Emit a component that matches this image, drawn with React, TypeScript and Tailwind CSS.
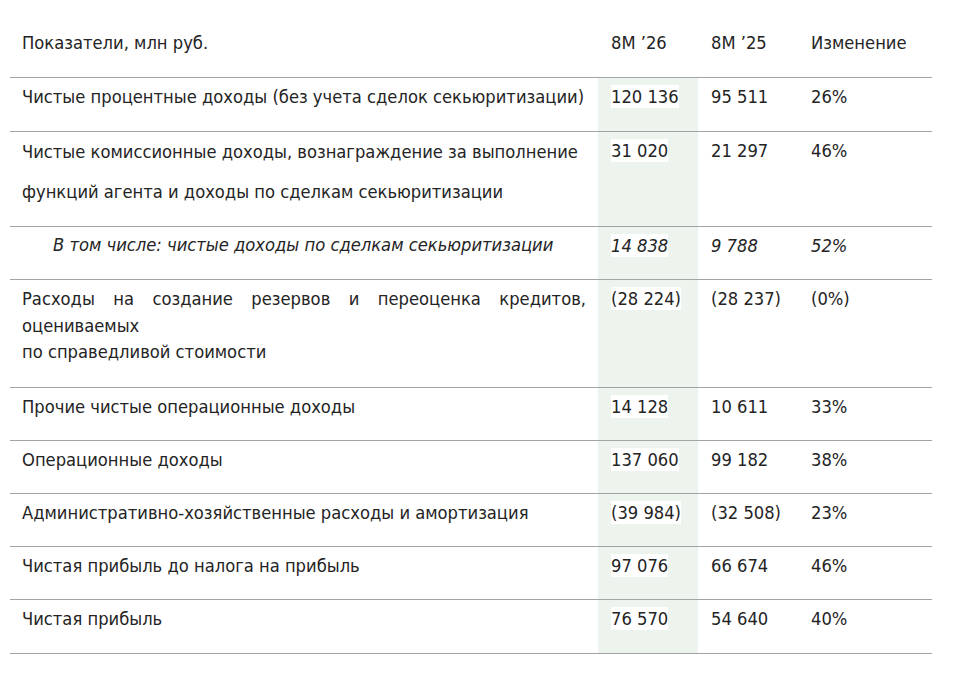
type Row = {
  label: React.ReactNode;
  a: string;
  b: string;
  c: string;
  italic?: boolean;
  h: string;
  lab: string;
};

const rows: Row[] = [
  { label: "Чистые процентные доходы (без учета сделок секьюритизации)", a: "120 136", b: "95 511", c: "26%", h: "h-[53px]", lab: "pt-[8px] leading-[22px]" },
  {
    label: (
      <>
        Чистые комиссионные доходы, вознаграждение за выполнение
        <br />
        функций агента и доходы по сделкам секьюритизации
      </>
    ),
    a: "31 020", b: "21 297", c: "46%", h: "h-[94px]", lab: "pt-[0px] leading-[40px]",
  },
  { label: "В том числе: чистые доходы по сделкам секьюритизации", a: "14 838", b: "9 788", c: "52%", italic: true, h: "h-[52px]", lab: "pt-[7px] leading-[22px]" },
  {
    label: (
      <>
        <span className="block text-justify [text-align-last:justify]">Расходы на создание резервов и переоценка кредитов,</span>
        оцениваемых
        <br />
        по справедливой стоимости
      </>
    ),
    a: "(28 224)", b: "(28 237)", c: "(0%)", h: "h-[107px]", lab: "pt-[6px] leading-[26.5px]",
  },
  { label: "Прочие чистые операционные доходы", a: "14 128", b: "10 611", c: "33%", h: "h-[52px]", lab: "pt-[8px] leading-[22px]" },
  { label: "Операционные доходы", a: "137 060", b: "99 182", c: "38%", h: "h-[52px]", lab: "pt-[8px] leading-[22px]" },
  { label: "Административно-хозяйственные расходы и амортизация", a: "(39 984)", b: "(32 508)", c: "23%", h: "h-[52px]", lab: "pt-[8px] leading-[22px]" },
  { label: "Чистая прибыль до налога на прибыль", a: "97 076", b: "66 674", c: "46%", h: "h-[52px]", lab: "pt-[8px] leading-[22px]" },
  { label: "Чистая прибыль", a: "76 570", b: "54 640", c: "40%", h: "h-[53px]", lab: "pt-[8px] leading-[22px]" },
];

function App() {
  return (
    <div className="min-h-screen w-full bg-white pt-[10px] pl-[10px] text-[18.2px] text-[#242424] [font-family:'DejaVu_Sans_Condensed','DejaVu_Sans',sans-serif]">
      <div className="w-[922px]">
        <div className="grid grid-cols-[588px_100px_100px_134px] h-[67px] pt-[22px] leading-[22px]">
          <div className="pl-[12px]">Показатели, млн руб.</div>
          <div className="pl-[13px]">8М ’26</div>
          <div className="pl-[13px]">8М ’25</div>
          <div className="pl-[13px]">Изменение</div>
        </div>
        {rows.map((r, i) => (
          <div
            key={i}
            className={`grid grid-cols-[588px_100px_100px_134px] border-t border-[#a3a3a3] ${r.italic ? "italic" : ""}`}
          >
            <div className={`${r.h} ${r.lab} ${r.italic ? "pl-[43px]" : "pl-[12px] pr-[12px]"}`}>{r.label}</div>
            <div className={`${r.h} pt-[8px] bg-[#edf4ee] pl-[13px] leading-[22px]`}>
              <span className="bg-white py-[1px]">{r.a}</span>
            </div>
            <div className={`${r.h} pt-[8px] pl-[13px] leading-[22px]`}>{r.b}</div>
            <div className={`${r.h} pt-[8px] pl-[13px] leading-[22px]`}>{r.c}</div>
          </div>
        ))}
        <div className="border-t border-[#a3a3a3]" />
      </div>
    </div>
  );
}

export default App;
